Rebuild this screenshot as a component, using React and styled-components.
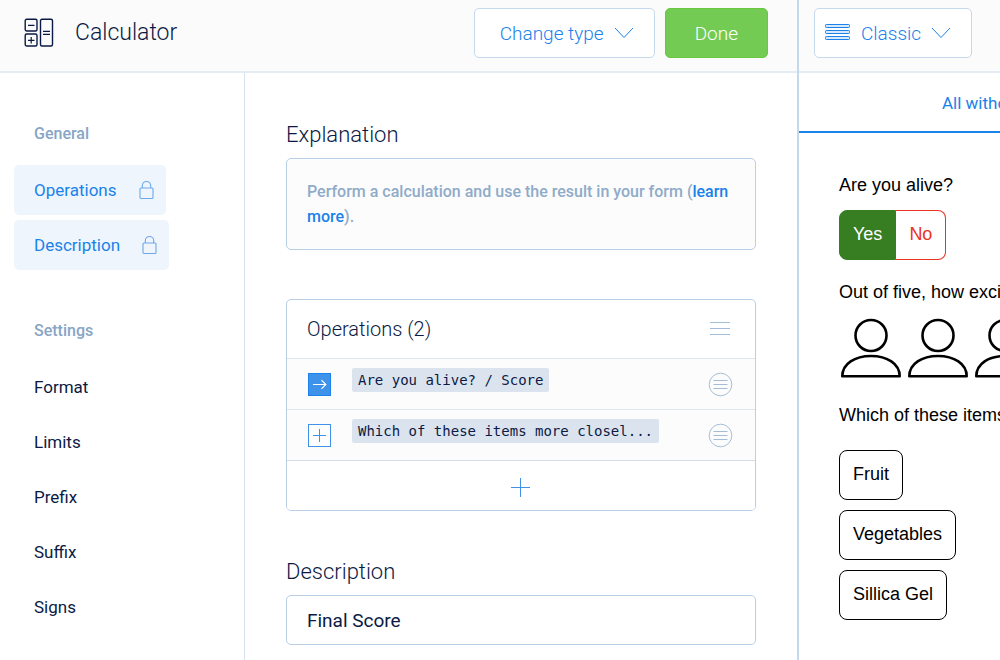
import React, { useState } from "react";
import styled, { createGlobalStyle } from "styled-components";

const GlobalStyle = createGlobalStyle`
  * {
    box-sizing: border-box;
  }

  body {
    margin: 0;
    background: #ffffff;
    color: #0b1a45;
    font-family: Roboto, "Liberation Sans", sans-serif;
    font-size: 16px;
  }

  button, input {
    font-family: inherit;
  }
`;

const SPage = styled.div`
  display: flex;
  min-height: 100vh;
  overflow: hidden;
`;

const SEditor = styled.div`
  flex: 1;
  min-width: 0;
  display: flex;
  flex-direction: column;
  border-right: 2px solid #c6d8eb;
`;

const SHeader = styled.header`
  display: flex;
  align-items: center;
  gap: 10px;
  padding: 8px 29px 13px 24px;
  background: #fbfbfb;
  border-bottom: 2px solid #e4edf5;

  &.preview {
    padding: 8px 15px 13px;
  }
`;

const SPageTitle = styled.h1`
  flex: 1;
  margin: 0 0 0 10px;
  font-weight: 300;
  font-size: 23px;
  line-height: 32px;
`;

const SButton = styled.button`
  display: flex;
  align-items: center;
  gap: 10px;
  height: 50px;
  padding: 0 ${(props) => (props.$compact ? "20px 0 10px" : "20px 0 25px")};
  border: 1px solid #c6d8eb;
  border-radius: 5px;
  background: #ffffff;
  color: #1a82ea;
  font-weight: 300;
  font-size: 19px;
  white-space: nowrap;
  cursor: pointer;

  &.done {
    padding: 0 29px;
    border-color: #68c93f;
    background: #74cb54;
    color: #ffffff;
    font-weight: 300;
  }
`;

const SBody = styled.div`
  flex: 1;
  display: flex;
`;

const SNav = styled.nav`
  width: 245px;
  flex-shrink: 0;
  padding: 36px 14px 20px;
  border-right: 1px solid #d6e2ef;
`;

const SNavTitle = styled.h2`
  height: 50px;
  margin: 0 0 6px;
  padding: 0 20px;
  color: #87a5c5;
  font-weight: 500;
  font-size: 16px;
  line-height: 50px;
`;

const SNavList = styled.ul`
  display: flex;
  flex-direction: column;
  align-items: flex-start;
  gap: 5px;
  margin: 0 0 36px;
  padding: 0;
  list-style: none;
`;

const SNavLink = styled.a`
  display: flex;
  align-items: center;
  gap: 22px;
  height: 50px;
  padding: 0 12px 1px 20px;
  border-radius: 5px;
  background: ${(props) => (props.$active ? "#eef5fd" : "transparent")};
  color: ${(props) => (props.$active ? "#1a82ea" : "#0b1a45")};
  font-size: 17px;
  text-decoration: none;
`;

const SMain = styled.main`
  flex: 1;
  min-width: 0;
  padding: 47px 41px 15px;
`;

const SHeading = styled.h2`
  margin: 0 0 8px;
  font-weight: 300;
  font-size: 22px;
  line-height: 30px;

  label {
    display: block;
  }
`;

const SNote = styled.p`
  margin: 0 0 49px;
  padding: 20px;
  border: 1px solid #b9cfe6;
  border-radius: 5px;
  background: #fcfcfc;
  color: #8fabc9;
  font-weight: 500;
  line-height: 25px;

  a {
    color: #1a82ea;
    text-decoration: none;
  }
`;

const SCard = styled.section`
  margin-bottom: 46px;
  border: 1px solid #b9cfe6;
  border-radius: 5px;
  overflow: hidden;
`;

const SCardHeader = styled.div`
  display: flex;
  align-items: center;
  justify-content: space-between;
  height: 58px;
  padding: 0 25px 0 20px;

  h2 {
    margin: 0;
    font-weight: 300;
    font-size: 20px;
  }
`;

const SIconButton = styled.button`
  display: flex;
  padding: 0;
  border: none;
  background: transparent;
  cursor: pointer;
`;

const SOperations = styled.ul`
  margin: 0;
  padding: 0;
  list-style: none;
`;

const SOperation = styled.li`
  display: flex;
  align-items: center;
  height: 51px;
  padding: 0 22px 0 20px;
  border-top: 1px solid #dbe6f1;
  background: #fcfcfc;
`;

const SToken = styled.span`
  align-self: flex-start;
  margin: 9px auto 0 20px;
  padding: 0 6px;
  border-radius: 2px;
  background: #dbe4ee;
  font-family: "DejaVu Sans Mono", "Liberation Mono", monospace;
  font-size: 14px;
  line-height: 24px;
  white-space: nowrap;
`;

const SAddButton = styled.button`
  display: flex;
  align-items: center;
  justify-content: center;
  width: 100%;
  height: 50px;
  padding: 4px 0 0;
  border: none;
  border-top: 1px solid #d0deec;
  background: #ffffff;
  cursor: pointer;
`;

const SInput = styled.input`
  width: 100%;
  height: 50px;
  padding: 0 20px;
  border: 1px solid #b9cfe6;
  border-radius: 5px;
  background: #ffffff;
  color: #0b1a45;
  font-size: 19px;
`;

const SPreview = styled.aside`
  width: 201px;
  flex-shrink: 0;
  overflow: hidden;
`;

const STabs = styled.div`
  height: 60px;
  padding-left: 143px;
  border-bottom: 2px solid #1a82ea;

  a {
    color: #1a82ea;
    font-size: 17px;
    line-height: 60px;
    text-decoration: none;
    white-space: nowrap;
  }
`;

const SForm = styled.form`
  padding: 40px 0 20px 40px;
  color: #000000;
  font-family: "Liberation Sans", Arial, sans-serif;
  font-size: 18px;
`;

const SQuestion = styled.fieldset`
  margin: 0 0 20px;
  padding: 0;
  border: none;
  white-space: nowrap;

  legend {
    padding: 0;
    line-height: 25px;
    margin-bottom: ${(props) => props.$gap || 12}px;
  }
`;

const SToggle = styled.div`
  display: flex;
`;

const SChoice = styled.button`
  height: 50px;
  padding: 0 13px 2px;
  border: 1px solid #000000;
  border-radius: 8px;
  background: #ffffff;
  color: #000000;
  font-size: 18px;
  cursor: pointer;

  &.yes {
    border-color: #377d22;
    border-radius: 8px 0 0 8px;
    background: #377d22;
    color: #ffffff;
  }

  &.no {
    border-color: #ea3323;
    border-left: none;
    border-radius: 0 8px 8px 0;
    color: #ea3323;
  }
`;

const SChoices = styled.div`
  display: flex;
  flex-direction: column;
  align-items: flex-start;
  gap: 10px;
`;

const SRating = styled.div`
  display: flex;
  gap: 3px;
  padding-bottom: 4px;
`;

const CalculatorIcon = () => (
  <svg width="31" height="30" viewBox="0 0 31 30" fill="none" stroke="#0b1a45" strokeWidth="1.4" aria-hidden="true">
    <rect x="1.2" y="1.2" width="11.8" height="11.8" rx="1.5" />
    <rect x="1.2" y="16" width="11.8" height="12" rx="1.5" />
    <rect x="16.5" y="1.2" width="12" height="26.8" rx="1.5" />
    <path d="M4 7.3h6.5M4 22.3h6.5M7.2 19v6.5M19 13.3h7M19 16.3h7" strokeWidth="1.2" />
  </svg>
);

const ChevronIcon = () => (
  <svg width="20" height="12" viewBox="0 0 20 12" fill="none" stroke="#1a82ea" aria-hidden="true">
    <path d="M1 1l9 9.5L19 1" />
  </svg>
);

const LayoutIcon = () => (
  <svg width="26" height="18" viewBox="0 0 26 18" fill="#d7e8fb" stroke="#1a82ea" aria-hidden="true">
    <rect x=".5" y=".5" width="24" height="3" rx=".8" />
    <rect x=".5" y="6.5" width="24" height="3" rx=".8" />
    <rect x=".5" y="12.5" width="24" height="3" rx=".8" />
  </svg>
);

const LockIcon = () => (
  <svg width="15" height="20" viewBox="0 0 15 20" fill="none" stroke="#6ea7ec" strokeWidth="1.1" aria-hidden="true">
    <rect x="1" y="8" width="13" height="10.5" rx="1" />
    <path d="M3.3 8V5.7a4.2 4.2 0 0 1 8.4 0V8" />
  </svg>
);

const MenuIcon = () => (
  <svg width="20" height="16" viewBox="0 0 20 16" stroke="#a3bdd8" aria-hidden="true">
    <path d="M0 1.5h20M0 7.5h20M0 13.5h20" />
  </svg>
);

const RoundMenuIcon = () => (
  <svg width="25" height="25" viewBox="0 0 25 25" fill="none" stroke="#a3bdd8" aria-hidden="true">
    <circle cx="12.5" cy="12.5" r="11.3" />
    <path d="M5.5 8.5h14M5.5 12.5h14M5.5 16.5h14" />
  </svg>
);

const EqualsToIcon = () => (
  <svg width="25" height="25" viewBox="0 0 25 25" fill="none" aria-hidden="true">
    <rect x="1.5" y="1.5" width="22" height="22" fill="#3f92ea" stroke="#1a82ea" />
    <path d="M6 12.5h12.5M14.5 8.2l4.3 4.3-4.3 4.3" stroke="#ffffff" strokeWidth="1.2" />
  </svg>
);

const PlusBoxIcon = () => (
  <svg width="25" height="25" viewBox="0 0 25 25" fill="#ffffff" stroke="#3f92ea" aria-hidden="true">
    <rect x="1.5" y="1.5" width="22" height="22" />
    <path d="M6 12.5h13M12.5 6v13" />
  </svg>
);

const PlusIcon = () => (
  <svg width="20" height="19" viewBox="0 0 20 19" stroke="#3f92ea" aria-hidden="true">
    <path d="M0 9.5h19M9.5 0v19" />
  </svg>
);

const PersonIcon = () => (
  <svg width="64" height="62" viewBox="0 0 64 62" fill="none" stroke="#000000" strokeWidth="2.6" strokeLinejoin="round" aria-hidden="true">
    <circle cx="32" cy="18.5" r="15.5" />
    <path d="M3.3 59.3h57.4C60.7 46.5 48 39 32 39S3.3 46.5 3.3 59.3z" />
  </svg>
);

const settings = ["Format", "Limits", "Prefix", "Suffix", "Signs"];
const activeSettings = ["Operations", "Description"];
const operations = [
  { icon: <EqualsToIcon />, label: "Are you alive? / Score" },
  { icon: <PlusBoxIcon />, label: "Which of these items more closel..." },
];
const items = ["Fruit", "Vegetables", "Sillica Gel"];

const Sidebar = () => (
  <SNav>
    <SNavTitle>General</SNavTitle>
    <SNavList>
      {activeSettings.map((name) => (
        <li key={name}>
          <SNavLink href={`#${name}`} $active>
            {name}
            <LockIcon />
          </SNavLink>
        </li>
      ))}
    </SNavList>
    <SNavTitle>Settings</SNavTitle>
    <SNavList>
      {settings.map((name) => (
        <li key={name}>
          <SNavLink href={`#${name}`}>{name}</SNavLink>
        </li>
      ))}
    </SNavList>
  </SNav>
);

const OperationsCard = () => (
  <SCard>
    <SCardHeader>
      <h2>Operations ({operations.length})</h2>
      <SIconButton type="button" aria-label="Operations menu">
        <MenuIcon />
      </SIconButton>
    </SCardHeader>
    <SOperations>
      {operations.map((operation) => (
        <SOperation key={operation.label}>
          <SIconButton type="button" aria-label="Operator">
            {operation.icon}
          </SIconButton>
          <SToken>{operation.label}</SToken>
          <SIconButton type="button" aria-label="Operation menu">
            <RoundMenuIcon />
          </SIconButton>
        </SOperation>
      ))}
    </SOperations>
    <SAddButton type="button" aria-label="Add operation">
      <PlusIcon />
    </SAddButton>
  </SCard>
);

const Preview = () => (
  <SPreview>
    <SHeader className="preview">
      <SButton type="button" $compact>
        <LayoutIcon />
        Classic
        <ChevronIcon />
      </SButton>
    </SHeader>
    <STabs>
      <a href="#all">All without</a>
    </STabs>
    <SForm>
      <SQuestion>
        <legend>Are you alive?</legend>
        <SToggle>
          <SChoice type="button" className="yes">Yes</SChoice>
          <SChoice type="button" className="no">No</SChoice>
        </SToggle>
      </SQuestion>
      <SQuestion>
        <legend>Out of five, how excited</legend>
        <SRating>
          {[1, 2, 3].map((score) => (
            <SIconButton key={score} type="button" aria-label={`${score} of five`}>
              <PersonIcon />
            </SIconButton>
          ))}
        </SRating>
      </SQuestion>
      <SQuestion $gap={22}>
        <legend>Which of these items</legend>
        <SChoices>
          {items.map((item) => (
            <SChoice key={item} type="button">{item}</SChoice>
          ))}
        </SChoices>
      </SQuestion>
    </SForm>
  </SPreview>
);

const App = () => {
  const [description, setDescription] = useState("Final Score");

  return (
    <SPage>
      <GlobalStyle />
      <SEditor>
        <SHeader>
          <CalculatorIcon />
          <SPageTitle>Calculator</SPageTitle>
          <SButton type="button">
            Change type
            <ChevronIcon />
          </SButton>
          <SButton type="button" className="done">Done</SButton>
        </SHeader>
        <SBody>
          <Sidebar />
          <SMain>
            <SHeading>Explanation</SHeading>
            <SNote>
              Perform a calculation and use the result in your form (<a href="#learn">learn more</a>).
            </SNote>
            <OperationsCard />
            <SHeading>
              <label htmlFor="description">Description</label>
            </SHeading>
            <SInput
              id="description"
              type="text"
              value={description}
              onChange={(e) => setDescription(e.target.value)}
            />
          </SMain>
        </SBody>
      </SEditor>
      <Preview />
    </SPage>
  );
};

export default App;
